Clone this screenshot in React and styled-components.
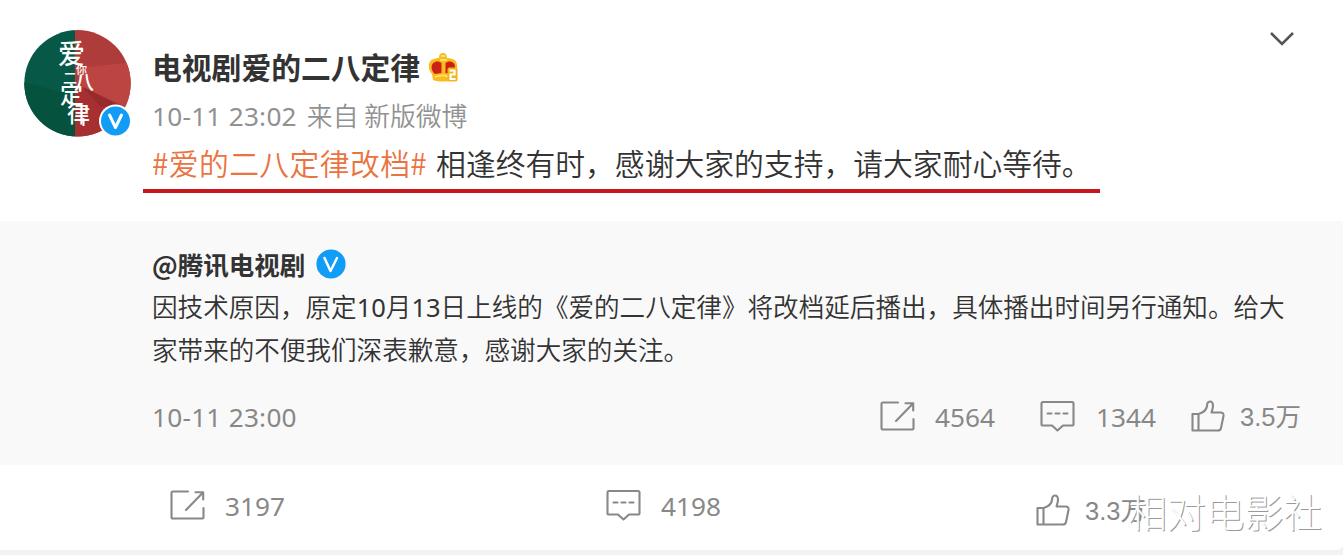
import styled, { createGlobalStyle } from "styled-components";

const GlobalStyle = createGlobalStyle`
  * {
    box-sizing: border-box;
  }

  body {
    margin: 0;
    background: #f2f2f2;
    font-family: "Noto Sans CJK SC", sans-serif;
    overflow: hidden;
  }
`;

const Card = styled.article`
  position: relative;
  width: 1343px;
  height: 550px;
  background: #fff;
  border-radius: 0 0 6px 0;
`;

const Header = styled.header`
  display: flex;
  height: 221px;
  padding: 30px 0 0 23px;
`;

const AvatarBox = styled.div`
  flex: none;
  width: 120px;
  height: 110px;
`;

const Intro = styled.div`
  width: 957px;
  height: 163px;
`;

const NameRow = styled.div`
  display: flex;
  align-items: center;
  height: 76px;
  padding-left: 9px;
`;

const Name = styled.h1`
  margin: 0 8px 4px 0;
  font-size: 29.8px;
  line-height: 40px;
  font-weight: 700;
  color: #333;
  white-space: nowrap;
`;

const Meta = styled.div`
  height: 38px;
  padding-left: 9px;
  margin-top: -10px;
  font-size: 25.8px;
  line-height: 38px;
  font-weight: 350;
  color: #919191;
  white-space: nowrap;
`;

const Latin = styled.span`
  font-family: "Noto Sans", sans-serif;
  font-weight: 400;
  font-size: ${({ $size }) => $size}px;
  letter-spacing: ${({ $track }) => $track || 0}px;
  margin-right: ${({ $gap }) => $gap || 0}px;
  line-height: 1;
`;

const PostText = styled.p`
  height: 59px;
  margin: 0;
  padding: 6px 0 0 9px;
  border-bottom: 4px solid #c8161d;
  font-size: 29.8px;
  line-height: 44px;
  font-weight: 350;
  color: #333;
  white-space: nowrap;
`;

const Topic = styled.span`
  margin-right: 9px;
  letter-spacing: 0.4px;
  color: #eb7340;
`;

const MenuButton = styled.button`
  margin: 0 47px 0 auto;
  padding: 0;
  width: 28px;
  height: 18px;
  border: 0;
  background: none;
`;

const Quote = styled.section`
  height: 244px;
  padding: 23px 42px 0 152px;
  background: #f9f9f9;
`;

const QuoteAuthor = styled.div`
  display: flex;
  align-items: center;
  gap: 11px;
  height: 40px;
  font-size: 25.5px;
  font-weight: 700;
  color: #333;
`;

const AuthorName = styled.span`
  margin-bottom: 2px;
`;

const QuoteText = styled.p`
  margin: 0;
  font-size: 25.58px;
  line-height: 43px;
  font-weight: 350;
  color: #333;
  white-space: nowrap;
`;

const QuoteFooter = styled.div`
  display: flex;
  align-items: center;
  height: 46px;
  margin-top: 24px;
  color: #888;
`;

const QuoteStats = styled.div`
  display: flex;
  margin-left: auto;
`;

const Stat = styled.div`
  display: flex;
  align-items: center;
  width: ${({ $width }) => $width}px;
  gap: ${({ $gap }) => $gap || 20}px;
  font-size: 25px;
  line-height: 36px;
  color: #888;
  white-space: nowrap;

  svg {
    flex: none;
    margin-top: -2px;
  }
`;

const Count = styled.span`
  margin-top: -1px;
  font-family: ${({ $plain }) => ($plain ? '"Liberation Sans"' : '"Noto Sans"')},
    "Noto Sans CJK SC", sans-serif;
  font-size: ${({ $plain }) => ($plain ? 25.5 : 26.2)}px;
  font-weight: 400;
`;

const Actions = styled.footer`
  display: flex;
  height: 85px;
  padding: 22px 0 0 170px;
`;

const LowStat = styled(Stat)`
  height: 38px;
  margin-top: ${({ $down }) => $down || 0}px;
`;

const Watermark = styled.div`
  position: absolute;
  left: 1128px;
  top: 481px;
  font-size: 38.8px;
  line-height: 58px;
  font-weight: 300;
  color: #fff;
  text-shadow: 1px 1px 0 #999;
  white-space: nowrap;
`;

const Avatar = () => (
  <svg width="112" height="110" viewBox="0 0 112 110">
    <defs>
      <clipPath id="face">
        <circle cx="54.5" cy="53.3" r="53.2" />
      </clipPath>
    </defs>
    <g clipPath="url(#face)">
      <path d="M0 0h52v110H0z" fill="#075846" />
      <path d="M0 52l52 14v44H0z" fill="#05523f" />
      <path d="M52 0h60v110H52z" fill="#ad3c3b" />
      <path d="M52 38l60-6v49L60 57z" fill="#bc4441" />
      <path d="M52 60l10-2 50 26v26H52z" fill="#a52f31" />
      <path d="M60 57l36 18-18 2z" fill="#962a2d" />
    </g>
    <text fill="#fff" fontFamily='"Noto Sans CJK SC", serif' fontWeight="500">
      <tspan x="35" y="34" fontSize="27">爱</tspan>
      <tspan x="53" y="44" fontSize="11">你</tspan>
      <tspan x="40" y="53" fontSize="14">二</tspan>
      <tspan x="51" y="60" fontSize="20">八</tspan>
      <tspan x="37" y="73" fontSize="23">定</tspan>
      <tspan x="44" y="92" fontSize="23">律</tspan>
    </text>
    <path d="M60.500 88v8" stroke="#fff" strokeWidth="2" fill="none" />
    <circle cx="92.5" cy="91" r="16.5" fill="#fff" />
    <circle cx="92.5" cy="91" r="14.5" fill="#119cf5" />
    <path
      d="M86.500 85l6 12.500 6-12.500"
      fill="none"
      stroke="#fff"
      strokeWidth="3"
      strokeLinejoin="round"
      strokeLinecap="round"
    />
  </svg>
);

const Crown = () => (
  <svg width="32" height="32" viewBox="0 0 32 32">
    <path
      d="M5 28L4 22C-1 17 0 8 6 7c2-1 3-1 5-1 0-4 2-5 4-5s4 1 4 5c2 0 3 0 5 1 6 1 7 10 2 15l-1 6c-6 2-14 2-20 0z"
      fill="#f8bb20"
    />
    <path d="M13.500 11v10l-6.500 1C2 18 3 11 7 10c3-1 5 0 6.500 1z" fill="#ce2115" />
    <path d="M17.500 11v10l6.500 1c4-4 4-11 0-12-3-1-5 0-6.500 1z" fill="#ce2115" />
    <path
      d="M12 8h7M13 4h4M7 25c5-2 11-2 14 0"
      stroke="#fee367"
      strokeWidth="1.8"
      fill="none"
    />
    <rect x="19.500" y="15.500" width="10" height="14" rx="2" fill="#f3b51d" />
    <path d="M21.500 18.500h5v4H22.500v4.500h5" fill="none" stroke="#fff" strokeWidth="2.2" />
  </svg>
);

const Verified = () => (
  <svg width="30" height="30" viewBox="0 0 30 30">
    <circle cx="15" cy="15" r="14.6" fill="#119cf5" />
    <path
      d="M8.500 9l6 13 6.500-13"
      fill="none"
      stroke="#fff"
      strokeWidth="2.5"
      strokeLinecap="round"
      strokeLinejoin="round"
    />
  </svg>
);

const iconProps = {
  fill: "none",
  stroke: "#888",
  strokeWidth: 2.1,
  strokeLinejoin: "round",
  strokeLinecap: "round",
};

const ShareIcon = () => (
  <svg width="35" height="30" viewBox="0 0 35 30" {...iconProps}>
    <path d="M18 1.500H3Q1.500 1.500 1.500 3v24q0 1.500 1.500 1.500h29.500q1 0 1-1V18" />
    <path d="M16 20L33 2.500M25.500 2.200h7.700v7.300" />
  </svg>
);

const CommentIcon = () => (
  <svg width="35" height="32" viewBox="0 0 35 32" {...iconProps}>
    <path d="M3 2h29q1.500 0 1.500 1.500v21q0 1-1 1H23l-5.500 5-5.500-5H2.500q-1 0-1-1v-21Q1.500 2 3 2z" />
    <path d="M7.500 13.500h4M15.500 13.500h4M23.500 13.500h4" />
  </svg>
);

const LikeIcon = () => (
  <svg width="34" height="32" viewBox="0 0 34 32" {...iconProps}>
    <path d="M1.500 14h6v16.500h-6zM7.500 14c5-1.500 8-4 8.500-8 0-6 6-6 6-.5 0 3-1 5-1.500 7h9q3.500 0 3 3.500L30 28q-.5 2.500-3 2.500H7.500" />
  </svg>
);

const App = () => (
  <>
    <GlobalStyle />
    <Card>
      <Header>
        <AvatarBox>
          <Avatar />
        </AvatarBox>
        <Intro>
          <NameRow>
            <Name>电视剧爱的二八定律</Name>
            <Crown />
          </NameRow>
          <Meta>
            <Latin $size={26.2} $track={0.25} $gap={10}>
              10-11 23:02
            </Latin>
            来自 新版微博
          </Meta>
          <PostText>
            <Topic>#爱的二八定律改档#</Topic>
            相逢终有时，感谢大家的支持，请大家耐心等待。
          </PostText>
        </Intro>
        <MenuButton aria-label="menu">
          <svg width="28" height="18" viewBox="0 0 28 18">
            <path d="M3 3l11 11L25 3" fill="none" stroke="#555" strokeWidth="2.6" />
          </svg>
        </MenuButton>
      </Header>

      <Quote>
        <QuoteAuthor>
          <AuthorName>@腾讯电视剧</AuthorName>
          <Verified />
        </QuoteAuthor>
        <QuoteText>
          因技术原因，原定<Latin $size={25.5}>10</Latin>月<Latin $size={25.5}>13</Latin>
          日上线的《爱的二八定律》将改档延后播出，具体播出时间另行通知。给大
          <br />
          家带来的不便我们深表歉意，感谢大家的关注。
        </QuoteText>
        <QuoteFooter>
          <Latin $size={26.2} $track={0.25}>
            10-11 23:00
          </Latin>
          <QuoteStats>
            <Stat $width={160}>
              <ShareIcon />
              <Count>4564</Count>
            </Stat>
            <Stat $width={151} $gap={21}>
              <CommentIcon />
              <Count>1344</Count>
            </Stat>
            <Stat $width={110} $gap={15}>
              <LikeIcon />
              <Count $plain>3.5万</Count>
            </Stat>
          </QuoteStats>
        </QuoteFooter>
      </Quote>

      <Actions>
        <LowStat $width={436}>
          <ShareIcon />
          <Count>3197</Count>
        </LowStat>
        <LowStat $width={430}>
          <CommentIcon />
          <Count>4198</Count>
        </LowStat>
        <LowStat $width={120} $gap={15} $down={5}>
          <LikeIcon />
          <Count $plain>3.3万</Count>
        </LowStat>
      </Actions>
      <Watermark>相对电影社</Watermark>
    </Card>
  </>
);

export default App;
